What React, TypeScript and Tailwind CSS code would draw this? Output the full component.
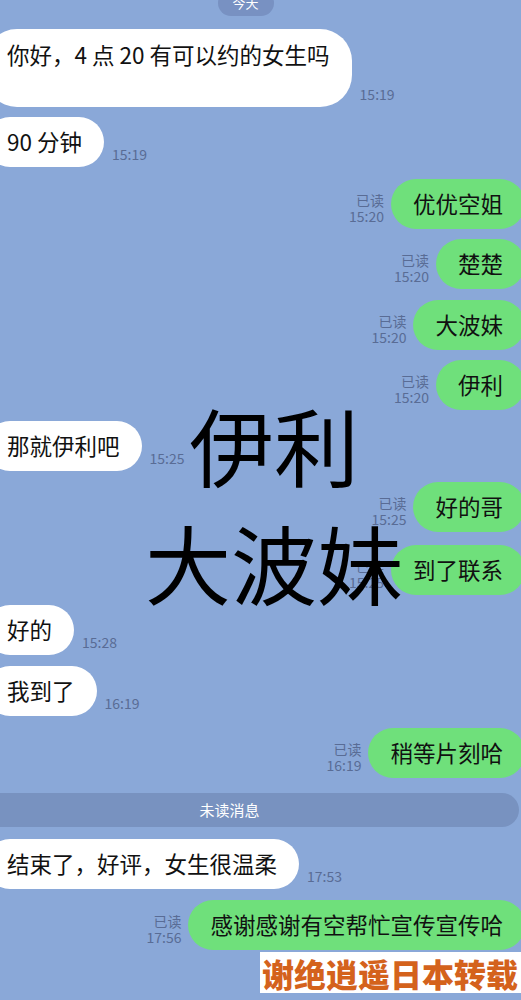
import React from "react";

const Left = ({ text, time, className }: { text: string; time: string; className: string }) => {
  return (
    <div className={`flex items-end gap-[8px] ${className}`}>
      <div className="ml-[-15px] h-[50px] px-[22px] flex items-center bg-white rounded-[25px] text-[22.5px] text-[#111]">
        {text}
      </div>
      <div className="pb-[5px] text-[14px] leading-[16px] text-[#596c95]">{time}</div>
    </div>
  );
};

const Right = ({ text, time, className }: { text: string; time: string; className: string }) => {
  return (
    <div className={`flex items-end justify-end gap-[7px] ${className}`}>
      <div className="pb-[5px] flex flex-col items-end text-[14px] leading-[16px] text-[#596c95]">
        <span>已读</span>
        <span>{time}</span>
      </div>
      <div className="mr-[-4px] h-[50px] px-[22px] flex items-center bg-[#6fe07b] rounded-[25px] text-[22.5px] text-[#111]">
        {text}
      </div>
    </div>
  );
};

export default function App() {
  return (
    <div
      className="relative w-[521px] h-[1000px] overflow-hidden bg-[#8aa8d8]"
      style={{ fontFamily: '"Noto Sans CJK SC", "Noto Sans", sans-serif' }}
    >
      <div className="flex justify-center">
        <div className="mt-[-10px] ml-[-30px] h-[26px] w-[56px] rounded-[13px] bg-[#7891c2] flex items-center justify-center text-[13px] text-white">
          今天
        </div>
      </div>

      <div className="flex items-end gap-[8px] mt-[13px]">
        <div className="ml-[-15px] h-[78px] px-[22px] pt-[9px] bg-white rounded-[32px] text-[22.5px] text-[#111]">
          你好，4 点 20 有可以约的女生吗
        </div>
        <div className="pb-[5px] text-[14px] leading-[16px] text-[#596c95]">15:19</div>
      </div>
      <Left text="90 分钟" time="15:19" className="mt-[10px]" />
      <Right text="优优空姐" time="15:20" className="mt-[12px]" />
      <Right text="楚楚" time="15:20" className="mt-[10px]" />
      <Right text="大波妹" time="15:20" className="mt-[11px]" />
      <Right text="伊利" time="15:20" className="mt-[10px]" />
      <Left text="那就伊利吧" time="15:25" className="mt-[11px]" />
      <Right text="好的哥" time="15:25" className="mt-[11px]" />
      <Right text="到了联系" time="15:25" className="mt-[13px]" />
      <Left text="好的" time="15:28" className="mt-[10px]" />
      <Left text="我到了" time="16:19" className="mt-[11px]" />
      <Right text="稍等片刻哈" time="16:19" className="mt-[12px]" />

      <div className="mt-[15px] ml-[-60px] mr-[2px] h-[34px] rounded-r-[17px] bg-[#7892c0] flex items-center justify-center text-[15px] text-white">
        未读消息
      </div>

      <Left text="结束了，好评，女生很温柔" time="17:53" className="mt-[12px]" />
      <Right text="感谢感谢有空帮忙宣传宣传哈" time="17:56" className="mt-[11px]" />

      <div className="absolute left-[189px] top-[401px] text-[85px] leading-none text-black">伊利</div>
      <div className="absolute left-[145px] top-[519px] text-[86px] leading-none text-black">大波妹</div>

      <div className="absolute left-[260px] top-[952px] w-[270px] h-[41px] bg-white flex items-center pl-[2px] text-[32px] font-black leading-none text-[#d4621c]">
        谢绝逍遥日本转载
      </div>
    </div>
  );
}
